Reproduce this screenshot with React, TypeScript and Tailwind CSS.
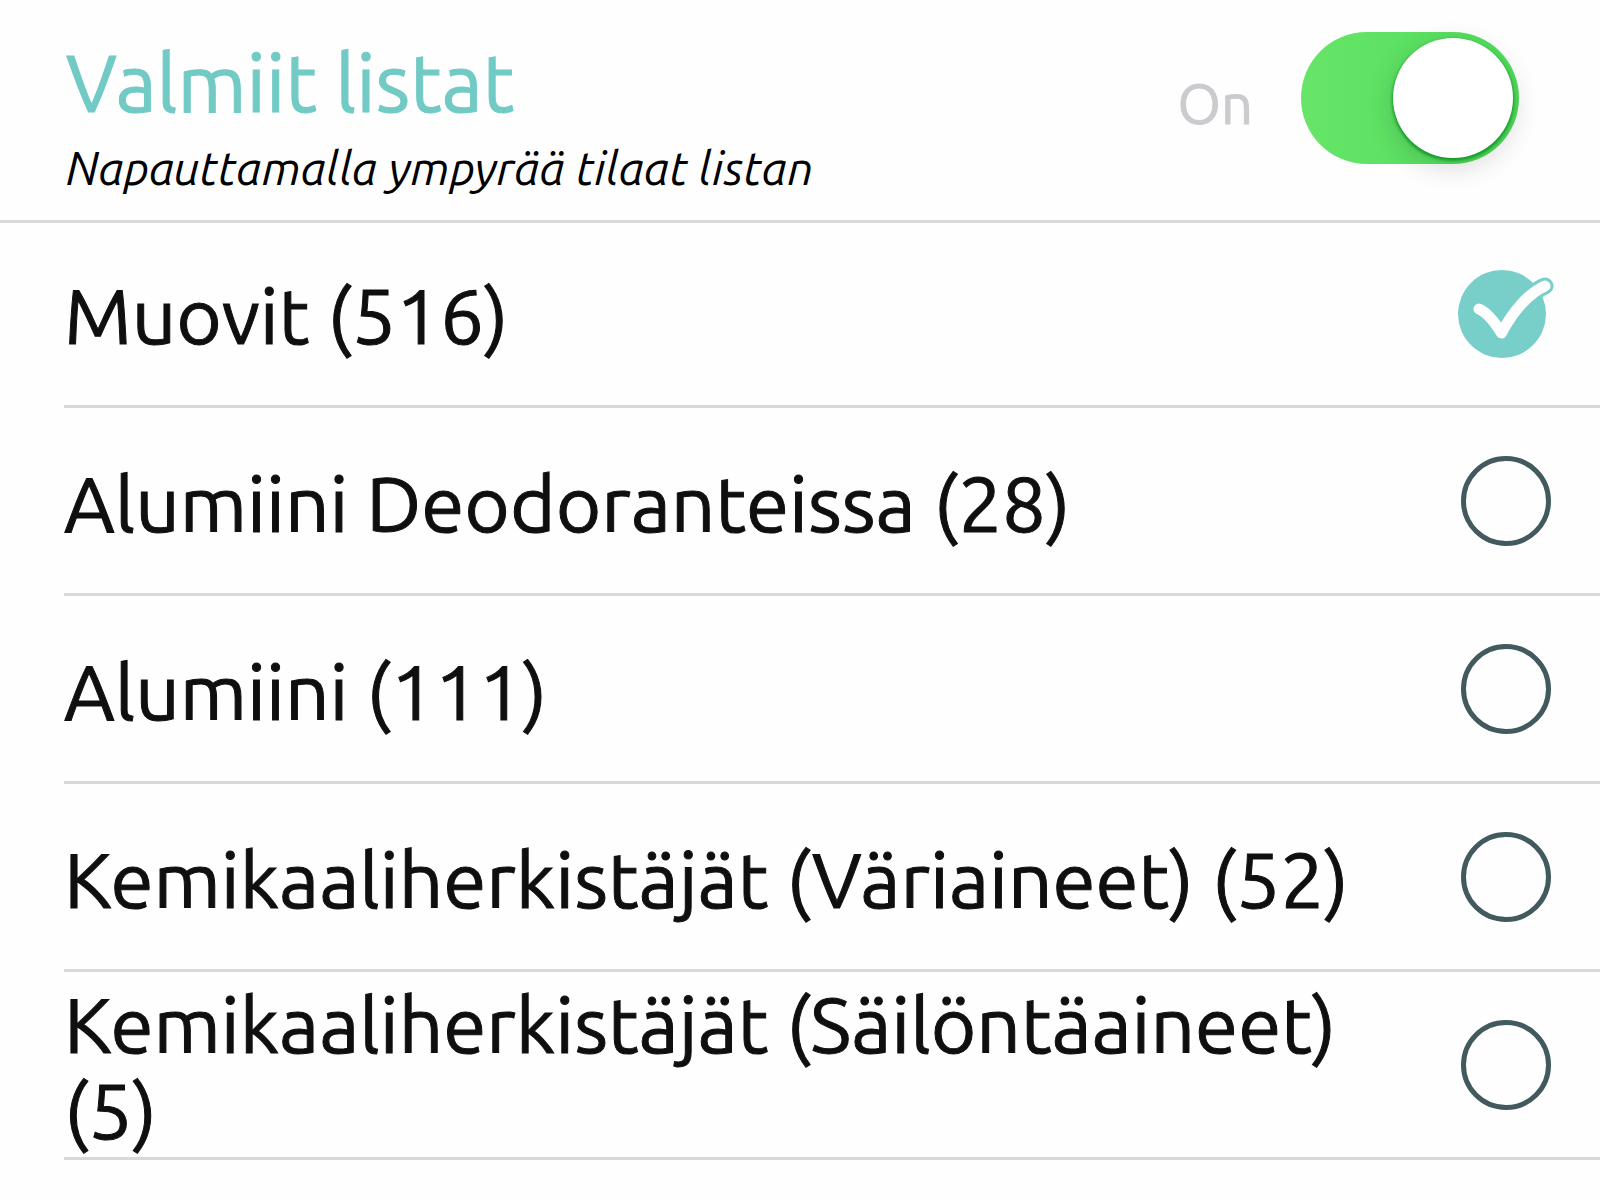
import React, { useState } from 'react';

interface ReadyList {
    id: string;
    name: string;
    count: number;
}

const readyLists: ReadyList[] = [
    { id: 'plastics', name: 'Muovit', count: 516 },
    { id: 'aluminium-deodorants', name: 'Alumiini Deodoranteissa', count: 28 },
    { id: 'aluminium', name: 'Alumiini', count: 111 },
    { id: 'colorants', name: 'Kemikaaliherkistäjät (Väriaineet)', count: 52 },
    { id: 'preservatives', name: 'Kemikaaliherkistäjät (Säilöntäaineet)', count: 5 },
];

const CheckedIcon: React.FC = () => (
    <svg viewBox="-3 0 96 92" className="w-24 h-[92px] hidden overflow-visible peer-checked:block" fill="none" aria-hidden="true">
        <circle cx="44" cy="47" r="44" fill="#78cfca" />
        {/* Outline of the tick where it leaves the circle */}
        <path
            d="M62 38C70 30 79 22 87 19"
            stroke="#78cfca"
            strokeWidth="17"
            strokeLinecap="round"
        />
        <path
            d="M21 42C28 45 36 54 43.500 66C55 44 71 26 87 19"
            stroke="#fff"
            strokeWidth="11"
            strokeLinecap="round"
            strokeLinejoin="round"
        />
    </svg>
);

const ListRow: React.FC<{ list: ReadyList; checked: boolean; onToggle: () => void }> = ({ list, checked, onToggle }) => (
    <li className="border-b-3 border-[#d8d8d8]">
        <label className="flex items-center justify-between gap-12 min-h-[185px] pr-[49px] cursor-pointer">
            <span className="pt-1 text-[78px] leading-[86px] text-[#0f0f0f] [-webkit-text-stroke:1px]">
                {list.name} ({list.count})
            </span>
            <span className="shrink-0">
                <input type="checkbox" checked={checked} onChange={onToggle} className="peer sr-only" />
                <CheckedIcon />
                <span className="block peer-checked:hidden size-[90px] rounded-full border-5 border-[#42595e]" />
            </span>
        </label>
    </li>
);

const App: React.FC = () => {
    const [enabled, setEnabled] = useState(true);
    const [selected, setSelected] = useState<string[]>(['plastics']);

    const toggleList = (id: string) => {
        setSelected(prev => prev.includes(id) ? prev.filter(item => item !== id) : [...prev, id]);
    };

    return (
        <main className="min-h-screen bg-[#fefefe] font-['Ubuntu','Noto_Sans',sans-serif]">
            <header className="flex items-start justify-between border-b-3 border-[#d8d8d8] pl-[66px] pr-[81px] pt-8 pb-4">
                <div>
                    <h1 className="text-[80px] leading-[100px] text-[#72cac5] [-webkit-text-stroke:1px]">Valmiit listat</h1>
                    <p className="text-[47px] leading-[72px] italic text-black">Napauttamalla ympyrää tilaat listan</p>
                </div>
                <label className="flex items-center gap-12 cursor-pointer">
                    <span className="pt-3 text-[56px] leading-[64px] text-[#cbcbcf] [-webkit-text-stroke:1px]">{enabled ? 'On' : 'Off'}</span>
                    <input
                        type="checkbox"
                        role="switch"
                        checked={enabled}
                        onChange={() => setEnabled(prev => !prev)}
                        className="peer sr-only"
                    />
                    <span className="flex w-[218px] h-[132px] p-1.5 rounded-full bg-gray-200 peer-checked:bg-linear-to-r from-[#67e569] to-[#4fdd5b] peer-checked:justify-end">
                        <span className="size-[120px] rounded-full bg-white shadow-[0_2px_3px_1px_rgba(0,140,30,0.75),0_8px_24px_4px_rgba(0,0,0,0.12)]" />
                    </span>
                </label>
            </header>
            <ul className="-mt-[3px] pl-16">
                {readyLists.map((list) => (
                    <ListRow
                        key={list.id}
                        list={list}
                        checked={selected.includes(list.id)}
                        onToggle={() => toggleList(list.id)}
                    />
                ))}
            </ul>
        </main>
    );
};

export default App;
